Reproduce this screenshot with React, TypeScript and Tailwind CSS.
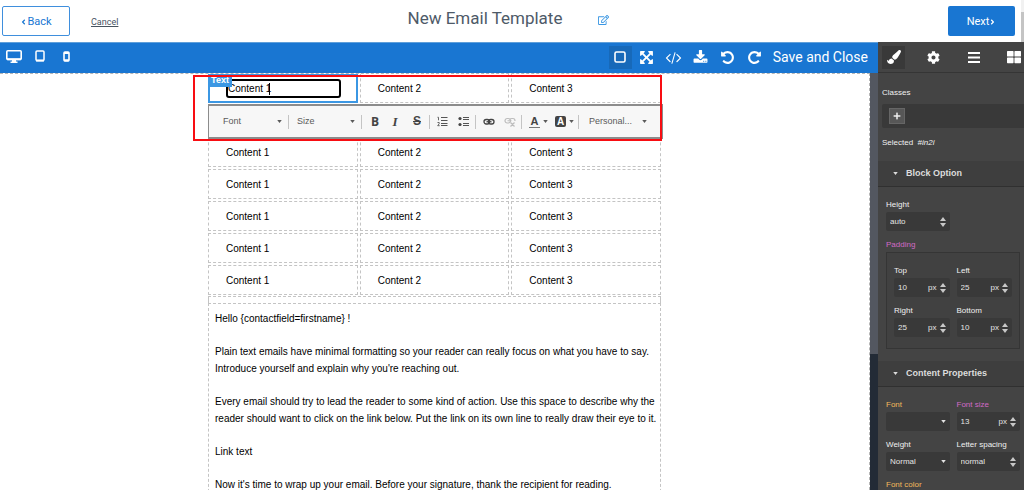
import React from "react";
import { FaAngleLeft, FaAngleRight, FaCog, FaPaintBrush, FaPlus, FaRegEdit, FaThLarge } from "react-icons/fa";

const ARROWS =
  "M1411 541l-355 355 355 355 144-144q29-31 70-14 39 17 39 59v448q0 26-19 45t-45 19h-448q-42 0-59-40-17-39 14-69l144-144-355-355-355 355 144 144q31 30 14 69-17 40-59 40h-448q-26 0-45-19t-19-45v-448q0-42 40-59 39-17 69 14l144 144 355-355-355-355-144 144q-19 19-45 19-12 0-24-5-40-17-40-59v-448q0-26 19-45t45-19h448q42 0 59 40 17 39-14 69l-144 144 355 355 355-355-144-144q-31-30-14-69 17-40 59-40h448q26 0 45 19t19 45v448q0 42-39 59-13 5-25 5-26 0-45-19z";
const CODE =
  "M553 1399l-50 50q-10 10-23 10t-23-10l-466-466q-10-10-10-23t10-23l466-466q10-10 23-10t23 10l50 50q10 10 10 23t-10 23l-393 393 393 393q10 10 10 23t-10 23zm591-1067l-373 1291q-4 13-15.5 19.5t-23.5 2.5l-62-17q-13-4-19.5-15.5t-2.5-24.5l373-1291q4-13 15.5-19.5t23.5-2.5l62 17q13 4 19.5 15.5t2.5 24.5zm657 651l-466 466q-10 10-23 10t-23-10l-50-50q-10-10-10-23t10-23l393-393-393-393q-10-10-10-23t10-23l50-50q10-10 23-10t23 10l466 466q10 10 10 23t-10 23z";
const DOWNLOAD =
  "M1344 1344q0-26-19-45t-45-19-45 19-19 45 19 45 45 19 45-19 19-45zm256 0q0-26-19-45t-45-19-45 19-19 45 19 45 45 19 45-19 19-45zm128-224v320q0 40-28 68t-68 28h-1472q-40 0-68-28t-28-68v-320q0-40 28-68t68-28h465l135 136q58 56 136 56t136-56l136-136h464q40 0 68 28t28 68zm-325-569q17 41-14 70l-448 448q-18 19-45 19t-45-19l-448-448q-31-29-14-70 17-39 59-39h256v-448q0-26 19-45t45-19h256q26 0 45 19t19 45v448h256q42 0 59 39z";
const UNDO =
  "M1664 896q0 156-61 298t-164 245-245 164-298 61q-172 0-327-72.5t-264-204.5q-7-10-6.5-22.5t8.5-20.5l137-138q10-9 25-9 16 2 23 12 73 95 179 147t225 52q104 0 198.5-40.5t163.5-109.5 109.5-163.5 40.5-198.5-40.5-198.5-109.5-163.5-163.5-109.5-198.5-40.5q-98 0-188 35.5t-160 101.5l137 138q31 30 14 69-17 40-59 40h-448q-26 0-45-19t-19-45v-448q0-42 40-59 39-17 69 14l130 129q107-101 244.5-156.5t284.5-55.5q156 0 298 61t245 164 164 245 61 298z";

const Glyph: React.FC<{ d: string; flip?: boolean }> = ({ d, flip }) => (
  <svg viewBox="0 0 1792 1792" className="h-[15px] w-[15px] overflow-visible" fill="currentColor">
    <path d={d} transform={flip ? "translate(1792 0) scale(-1 1)" : undefined} />
  </svg>
);

const actions = [
  { label: "Fullscreen", d: ARROWS },
  { label: "View code", d: CODE },
  { label: "Import", d: DOWNLOAD },
  { label: "Undo", d: UNDO },
  { label: "Redo", d: UNDO, flip: true },
];

const TopBar: React.FC = () => (
  <header className="flex h-[42px] shrink-0 items-stretch bg-white font-[Roboto,sans-serif]">
    <div className="flex flex-1 items-center pl-0.5">
      <button className="flex h-[30px] w-[68px] items-center justify-center rounded-xs border border-[#3f8fdd] pt-0.5 text-[11px] text-[#1976d2]">
        <FaAngleLeft className="h-2 w-[7px]" />
        Back
      </button>
      <a href="#" className="ml-[21px] pt-1 text-[9px] text-[#47535f] underline">
        Cancel
      </a>
    </div>
    <div className="flex items-center gap-9 pb-1">
      <h1 className="text-[17px] text-[#4e5a68]">New Email Template</h1>
      <button aria-label="Rename" className="pt-0.5 text-[#3b97e3]">
        <FaRegEdit className="h-[10px] w-[11px]" />
      </button>
    </div>
    <div className="flex flex-1 items-center justify-end pr-1.5">
      <button className="flex h-[30px] w-[67px] items-center justify-center rounded-xs bg-[#1976d2] pt-0.5 text-[11px] text-white">
        Next
        <FaAngleRight className="h-2 w-[7px]" />
      </button>
    </div>
    <div className="w-[3px] bg-[#f1f1f1] pt-3">
      <div className="h-full bg-[#c4c4c4]" />
    </div>
  </header>
);

const Commands: React.FC = () => (
  <div className="flex h-[31px] shrink-0 items-center border-t border-[#5f9fda] bg-[#1976d2] pb-0.5 text-white">
    <div className="flex flex-1 items-center pb-0.5 pl-1.5">
      <button aria-label="Desktop">
        <svg viewBox="0 0 16 13" className="h-[13px] w-4" fill="none" stroke="currentColor">
          <rect x=".8" y=".8" width="14.400" height="8.700" rx="1" strokeWidth="1.600" />
          <path d="M1 9.200h14" strokeWidth="2" />
          <path d="M6 10h4v1.500h1.500V13h-7v-1.500H6z" fill="currentColor" stroke="none" />
        </svg>
      </button>
      <button aria-label="Tablet" className="ml-[13px]">
        <svg viewBox="0 0 10 12" className="h-3 w-[10px]" fill="none" stroke="currentColor">
          <rect x="1" y="1" width="8" height="9.500" rx="1" strokeWidth="1.500" />
          <path d="M1 10.600h8" strokeWidth="2" />
        </svg>
      </button>
      <button aria-label="Mobile" className="ml-[18px]">
        <svg viewBox="0 0 7 11" className="h-[11px] w-[7px]" fill="none" stroke="currentColor">
          <rect x="1" y="1" width="5" height="9" rx="1" strokeWidth="1.600" />
          <path d="M1 2h5M1 9.200h5" strokeWidth="2" />
        </svg>
      </button>
    </div>
    <button aria-label="View components" className="mr-[7px] flex h-[23px] w-[23px] items-center justify-center bg-[#1769b9]">
      <svg viewBox="0 0 12 12" className="h-3 w-3" fill="none" stroke="currentColor" strokeWidth="1.600">
        <rect x="1" y="1" width="10" height="10" rx="1.500" />
      </svg>
    </button>
    <div className="flex gap-3">
      {actions.map((a) => (
        <button key={a.label} aria-label={a.label}>
          <Glyph d={a.d} flip={a.flip} />
        </button>
      ))}
    </div>
    <button className="mr-[10px] ml-[11px] font-[Roboto,sans-serif] text-[14px]">Save and Close</button>
  </div>
);

const Caret: React.FC = () => (
  <svg viewBox="0 0 6 4" className="h-[3px] w-[5px]" fill="currentColor">
    <path d="M0 0h6L3 4z" />
  </svg>
);

const Divider: React.FC = () => <div className="h-[14px] w-px bg-[#c4c4c4]" />;

const RichTextBar: React.FC = () => (
  <div className="absolute top-[31px] -right-0.5 left-0 flex h-[35px] items-center border-y-2 border-r-2 border-l border-[#8c8c8c] bg-[#f7f7f7] pl-3.5 text-[9px] text-[#5a5a5a]">
    <button className="flex w-[59px] items-center justify-between">
      Font <Caret />
    </button>
    <div className="mr-2 ml-[6px]">
      <Divider />
    </div>
    <button className="flex w-[58px] items-center justify-between">
      Size <Caret />
    </button>
    <div className="mr-[9px] ml-[6px]">
      <Divider />
    </div>
    <button className="w-2 font-[Open_Sans,sans-serif] text-[12px] font-bold text-[#444]">B</button>
    <button className="ml-3 w-2 font-[Liberation_Serif,serif] text-[13px] font-bold text-[#444] italic">I</button>
    <button className="ml-[13px] w-[10px] text-[12px] font-bold text-[#444] line-through">S</button>
    <div className="mr-[7px] ml-[7px]">
      <Divider />
    </div>
    <button aria-label="Numbered list">
      <svg viewBox="0 0 11 11" className="h-[11px] w-[11px]" fill="none" stroke="#555">
        <path d="M4 1.500h6.500M4 4.500h6.500M4 7.500h6.500M4 9.500h6.500" />
        <path d="M.5 1.300h1v3M.5 6.500h1.700v1.200l-1.500 2h2" strokeWidth=".9" />
      </svg>
    </button>
    <button aria-label="Bulleted list" className="ml-[10px]">
      <svg viewBox="0 0 11 11" className="h-[11px] w-[11px]" fill="none" stroke="#555">
        <path d="M5 1.500h6M5 3.500h6M5 7.500h6M5 9.500h6" />
        <circle cx="2" cy="2.500" r="1.600" fill="#444" stroke="none" />
        <circle cx="2" cy="8.500" r="1.600" fill="#444" stroke="none" />
      </svg>
    </button>
    <div className="mr-[7px] ml-[6px]">
      <Divider />
    </div>
    <button aria-label="Link" className="text-[#444]">
      <svg viewBox="0 0 12 8" className="h-2 w-3" fill="none" stroke="currentColor" strokeWidth="1.300">
        <rect x="1" y="1.500" width="5.500" height="4.500" rx="2.200" />
        <rect x="5.500" y="1.500" width="5.500" height="4.500" rx="2.200" />
        <path d="M3.500 3.750h5" />
      </svg>
    </button>
    <button aria-label="Unlink" disabled className="ml-[9px] text-[#bdbdbd]">
      <svg viewBox="0 0 12 11" className="h-[11px] w-3" fill="none" stroke="currentColor" strokeWidth="1.200">
        <rect x="1" y="2.500" width="5.500" height="4.500" rx="2.200" />
        <path d="M5.500 3.500q1-1 2.500-1h1q2 0 2 2.500M3.500 4.750h4M6.500 6.500l4 4M10.500 6.500l-4 4" />
      </svg>
    </button>
    <div className="mr-[7px] ml-[5px]">
      <Divider />
    </div>
    <button aria-label="Text color" className="flex items-center gap-[3px]">
      <span className="w-[11px] border-b border-[#777] text-[11px] leading-[11px] font-bold text-[#444]">A</span>
      <Caret />
    </button>
    <button aria-label="Background color" className="ml-[7px] flex items-center gap-[3px]">
      <span className="h-[11px] w-[11px] rounded-xs bg-[#444] text-[10px] leading-[11px] font-bold text-white">A</span>
      <Caret />
    </button>
    <div className="mr-[10px] ml-1">
      <Divider />
    </div>
    <button className="flex w-[58px] items-center justify-between">
      Personal... <Caret />
    </button>
  </div>
);

const columns = [1, 2, 3];
const rows = [0, 1, 2, 3, 4, 5, 6];

const EditedCell: React.FC = () => (
  <>
    <div className="absolute -inset-px border-2 border-[#3b97e3]" />
    <input
      aria-label="Cell text"
      defaultValue="Content 1"
      className="absolute top-[5px] left-[17px] h-[19px] w-[115px] rounded-[3px] border-2 border-black bg-white"
    />
    <div className="absolute -top-px -left-px h-[14px] w-6 bg-[#3b97e3] text-center text-[9px] leading-[14px] font-bold text-white">
      Text
    </div>
    <span aria-hidden="true" className="absolute top-[9px] left-[60px] h-3 w-px bg-black" />
  </>
);

const EmailTable: React.FC = () => (
  <div className="relative -mt-px flow-root border-b border-dashed border-[#c4c4c4] pb-px">
    <table className="-mx-0.5 -my-0.5 w-[calc(100%+4px)] table-fixed border-separate border-spacing-0.5">
      <tbody>
        {rows.map((row) => (
          <tr key={row}>
            {columns.map((col) => (
              <td key={col} className="relative h-[30px] border border-dashed border-[#c4c4c4] px-[17px] py-0">
                {row === 0 && col === 1 && <EditedCell />}
                {/* row 1 sits under the floating text bar and stays empty */}
                {row !== 1 && !(row === 0 && col === 1) && `Content ${col}`}
              </td>
            ))}
          </tr>
        ))}
      </tbody>
    </table>
    <RichTextBar />
    <div className="pointer-events-none absolute top-0.5 -right-px -left-[15px] h-[66px] border-2 border-[#f80d12]" />
  </div>
);

const Canvas: React.FC = () => (
  <div className="flex min-h-0 flex-1">
    <main className="flex-1 overflow-hidden border-t border-r border-dashed border-[#b5b5b5] bg-white font-[Liberation_Sans,Arial,sans-serif] text-[10px] leading-[17px] text-black">
      <div className="mx-auto w-[453px]">
        <EmailTable />
        <div className="h-[6px] border-x border-dashed border-[#c4c4c4]" />
        <div className="flex h-[400px] flex-col gap-4 border border-dashed border-[#c4c4c4] px-1.5 pt-1.5 whitespace-nowrap">
          <p>Hello {"{contactfield=firstname}"} !</p>
          <p>
            Plain text emails have minimal formatting so your reader can really focus on what you have to say.
            <br />
            Introduce yourself and explain why you're reaching out.
          </p>
          <p>
            Every email should try to lead the reader to some kind of action. Use this space to describe why the
            <br />
            reader should want to click on the link below. Put the link on its own line to really draw their eye to it.
          </p>
          <p>Link text</p>
          <p>Now it's time to wrap up your email. Before your signature, thank the recipient for reading.</p>
        </div>
      </div>
    </main>
    <div className="flex w-2 flex-col bg-[#232b36]">
      <div className="h-[281px] bg-[#535760]" />
    </div>
  </div>
);

const Spinner: React.FC = () => (
  <svg viewBox="0 0 6 10" className="h-[10px] w-[6px] shrink-0" fill="#c8c8c8">
    <path d="M0 4h6L3 0zM0 6h6L3 10z" />
  </svg>
);

type FieldProps = {
  id: string;
  label: string;
  value: string;
  unit?: string;
  tone?: string;
};

const NumberField: React.FC<FieldProps> = ({ id, label, value, unit, tone = "text-[#f0f0f0]" }) => (
  <div className="min-w-0">
    <label htmlFor={id} className={`block h-4 leading-5 ${tone}`}>
      {label}
    </label>
    <div className="mt-px flex h-[19px] items-center rounded-xs bg-[#393939] pr-1 pl-1 text-[#e4e4e4]">
      <input id={id} defaultValue={value} className="w-0 min-w-0 flex-1" />
      {unit && <span className="mr-[3px]">{unit}</span>}
      <Spinner />
    </div>
  </div>
);

const SelectField: React.FC<FieldProps> = ({ id, label, value, tone = "text-[#f0f0f0]" }) => (
  <div className="min-w-0">
    <label htmlFor={id} className={`block h-4 leading-5 ${tone}`}>
      {label}
    </label>
    <div className="mt-px flex h-[19px] items-center rounded-xs bg-[#393939] pr-1 pl-1 text-[#e4e4e4]">
      <select id={id} className="min-w-0 flex-1 appearance-none">
        <option>{value}</option>
      </select>
      <Caret />
    </div>
  </div>
);

const SectionTitle: React.FC<{ title: string }> = ({ title }) => (
  <button className="flex h-[26px] w-full items-center gap-2 border-b border-[#303030] bg-[#3e3e3e] pl-[15px] text-[9px] font-bold text-[#dcdcdc]">
    <Caret />
    {title}
  </button>
);

const Sidebar: React.FC = () => (
  <aside className="w-[146px] shrink-0 overflow-hidden bg-[#444] font-[Liberation_Sans,Arial,sans-serif] text-[8px] text-[#f0f0f0]">
    <nav className="flex h-[31px] items-center gap-[17px] border-b border-[#353535] pl-1 text-white">
      <button aria-label="Styles" className="flex h-[23px] w-[23px] shrink-0 items-center justify-center bg-[#393939]">
        <FaPaintBrush className="h-[14px] w-[14px]" />
      </button>
      <button aria-label="Settings" className="flex w-[23px] shrink-0 justify-center">
        <FaCog className="h-[13px] w-[13px]" />
      </button>
      <button aria-label="Layers" className="flex w-[23px] shrink-0 justify-center">
        <svg viewBox="0 0 12 11" className="h-[11px] w-3" fill="none" stroke="currentColor" strokeWidth="2">
          <path d="M0 1h12M0 5.500h12M0 10h12" />
        </svg>
      </button>
      <button aria-label="Blocks" className="flex w-[23px] shrink-0 justify-center">
        <FaThLarge className="h-[14px] w-[14px]" />
      </button>
    </nav>
    <div className="h-[88px] pt-[11px] pl-1">
      <p className="h-4 leading-[18px]">Classes</p>
      <div className="mt-1 flex h-6 items-center rounded-l-xs bg-[#393939] pl-[7px]">
        <button aria-label="Add class" className="flex h-4 w-4 items-center justify-center border border-[#666] bg-[#575757]">
          <FaPlus className="h-2 w-2" />
        </button>
      </div>
      <p className="mt-1.5 h-4 leading-[18px]">
        Selected &nbsp;<i>#in2i</i>
      </p>
    </div>
    <SectionTitle title="Block Option" />
    <div className="pt-2 pr-1 pb-3 pl-2">
      <div className="w-16">
        <NumberField id="height" label="Height" value="auto" />
      </div>
      <p className="mt-[5px] h-4 leading-[18px] text-[#d16ac6]">Padding</p>
      <div className="grid grid-cols-2 gap-x-[7px] gap-y-1 border border-[#353535] bg-[#414141] pt-2 pr-[7px] pb-[11px] pl-[7px]">
        <NumberField id="top" label="Top" value="10" unit="px" />
        <NumberField id="left" label="Left" value="25" unit="px" />
        <NumberField id="right" label="Right" value="25" unit="px" />
        <NumberField id="bottom" label="Bottom" value="10" unit="px" />
      </div>
    </div>
    <SectionTitle title="Content Properties" />
    <div className="grid grid-cols-2 gap-x-[7px] gap-y-1 pt-2 pr-1 pl-2">
      <SelectField id="font" label="Font" value="" tone="text-[#f2b95c]" />
      <NumberField id="font-size" label="Font size" value="13" unit="px" tone="text-[#d16ac6]" />
      <SelectField id="weight" label="Weight" value="Normal" />
      <NumberField id="spacing" label="Letter spacing" value="normal" />
      <p className="h-4 leading-5 text-[#f2b95c]">Font color</p>
    </div>
  </aside>
);

const App: React.FC = () => (
  <div className="flex h-screen flex-col overflow-hidden bg-white">
    <TopBar />
    <div className="flex min-h-0 flex-1">
      <div className="flex min-w-0 flex-1 flex-col">
        <Commands />
        <Canvas />
      </div>
      <Sidebar />
    </div>
  </div>
);

export default App;
